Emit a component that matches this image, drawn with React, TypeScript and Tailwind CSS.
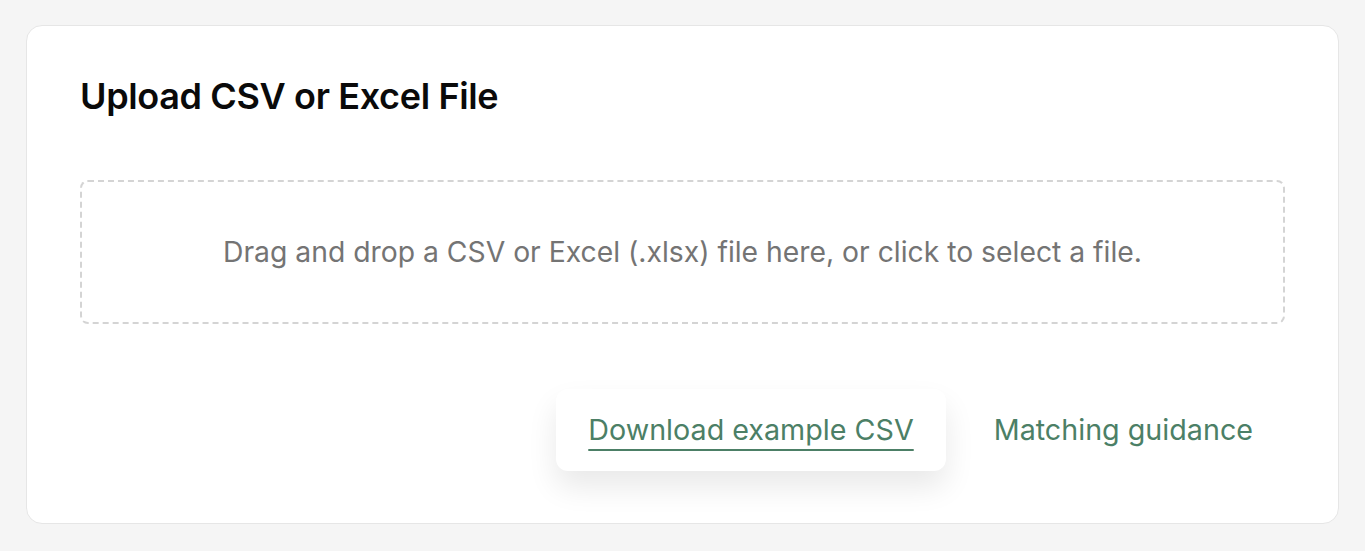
export default function App() {
  return (
    <div className="min-h-screen bg-[#f5f5f5] px-[26px] pt-[25px] pb-[26px]" style={{ fontFamily: 'Inter, "Noto Sans", sans-serif' }}>
      <div className="rounded-2xl border border-[#e6e6e6] bg-white px-[53px] pt-[48px] pb-[52px]">
        <h1 className="text-[36px] font-semibold leading-[44px] tracking-[-0.01em] text-[#0a0a0a]">
          Upload CSV or Excel File
        </h1>

        <div className="mt-[62px] flex h-[144px] items-center justify-center rounded-lg border-2 border-dashed border-[#d4d4d4]">
          <p className="text-[28.3px] text-[#747474]">
            Drag and drop a CSV or Excel (.xlsx) file here, or click to select a file.
          </p>
        </div>

        <div className="mt-[65px] flex justify-end gap-4">
          <button className="rounded-xl bg-white px-8 py-6 text-[28.7px] leading-[34px] text-[#4c7f66] shadow-[0_16px_30px_rgba(0,0,0,0.09)]">
            <span className="underline decoration-2 underline-offset-[9px]">Download example CSV</span>
          </button>
          <button className="rounded-xl px-8 py-6 text-[28.7px] leading-[34px] text-[#4c7f66]">
            Matching guidance
          </button>
        </div>
      </div>
    </div>
  );
}
